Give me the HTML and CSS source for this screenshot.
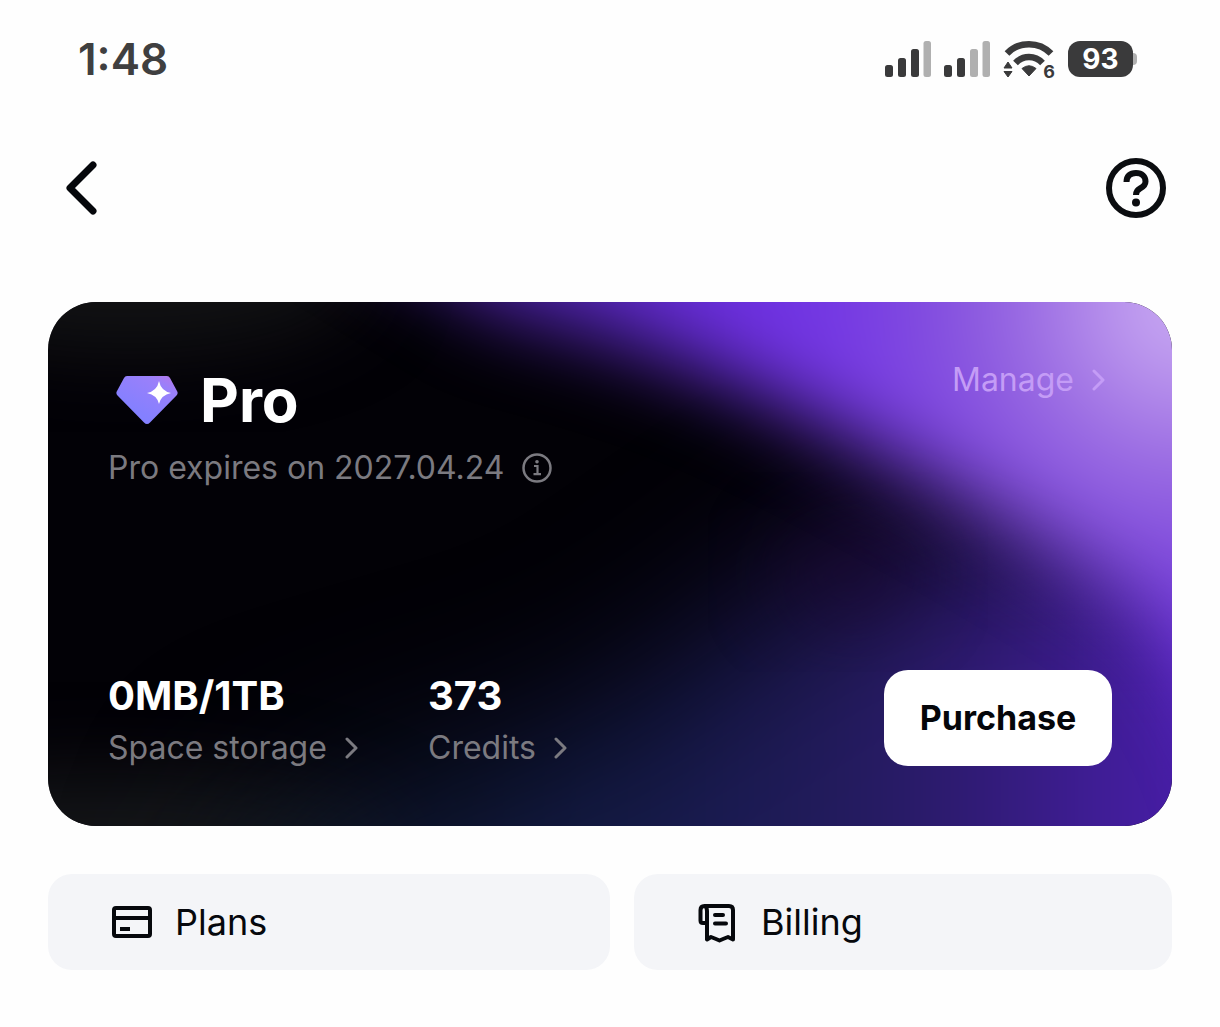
FILE: index.html
```
<!DOCTYPE html>
<html lang="en">
<head>
  <meta charset="UTF-8">
  <meta name="viewport" content="width=device-width, initial-scale=1.0">
  <title>Membership</title>
  <link rel="stylesheet" href="styles.css">
</head>
<body>
  <!-- Status bar -->
  <div class="status-bar">
    <span class="time">1:48</span>
    <div class="status-icons">
      <svg class="signal" width="46" height="36" viewBox="0 0 46 36">
        <rect x="0" y="24" width="8" height="12" rx="2.5"/>
        <rect x="13" y="17" width="8" height="19" rx="2.5"/>
        <rect x="26" y="8" width="8" height="28" rx="2.5"/>
        <rect class="off" x="38.500" y="0" width="7.500" height="36" rx="2.5"/>
      </svg>
      <svg class="signal" width="46" height="36" viewBox="0 0 46 36">
        <rect x="0" y="24" width="8" height="12" rx="2.5"/>
        <rect x="13" y="17" width="8" height="19" rx="2.5"/>
        <rect class="off" x="26" y="8" width="8" height="28" rx="2.5"/>
        <rect class="off" x="38.500" y="0" width="7.500" height="36" rx="2.5"/>
      </svg>
      <div class="wifi">
        <svg width="52" height="38" viewBox="0 0 52 38">
          <path d="M4 13.500C16 1 36 1 48 13.500" fill="none" stroke="#3a3a3b" stroke-width="6.500"/>
          <path d="M12.500 23C20 15 32 15 39.500 23" fill="none" stroke="#3a3a3b" stroke-width="6.500"/>
          <path d="M19 28.500q7-5.500 14 0L26 36z" fill="#3a3a3b" stroke="#3a3a3b" stroke-linejoin="round"/>
          <path d="M1 28l4-6L9 28zM1 31.500h8L5 37z" fill="#3a3a3b" stroke="#3a3a3b" stroke-linejoin="round"/>
        </svg>
        <span class="wifi-gen">6</span>
      </div>
      <div class="battery">93</div>
    </div>
  </div>

  <!-- Navigation -->
  <div class="nav">
    <button class="icon-btn" aria-label="Back">
      <svg width="34" height="56" viewBox="0 0 34 56">
        <path d="M29 5L6 28l23 23" fill="none" stroke="#05070b" stroke-width="7" stroke-linecap="round" stroke-linejoin="round"/>
      </svg>
    </button>
    <button class="icon-btn" aria-label="Help">
      <svg width="60" height="60" viewBox="0 0 60 60" fill="none" stroke="#0b0d10">
        <circle cx="30" cy="30" r="27" stroke-width="6"/>
        <path d="M20.500 24C20.500 18 24 15 30 15s9.500 3.500 9.500 8.500c0 4-2.500 5.500-5.500 7q-4 2-4 6.500" stroke-width="6"/>
        <circle cx="30" cy="44.500" r="4" fill="#0b0d10" stroke="none"/>
      </svg>
    </button>
  </div>

  <div class="content">
    <!-- Membership card -->
    <div class="card">
      <svg class="card-bg" viewBox="0 0 1124 524" preserveAspectRatio="none">
        <defs>
          <linearGradient id="indigo" x1="250" y1="0" x2="1124" y2="0" gradientUnits="userSpaceOnUse">
            <stop offset="0" stop-color="#0c1626"/>
            <stop offset="0.4" stop-color="#151c4c"/>
            <stop offset="0.7" stop-color="#271a62"/>
            <stop offset="1" stop-color="#4a1eac"/>
          </linearGradient>
          <radialGradient id="violet" cx="1140" cy="0" r="620" gradientUnits="userSpaceOnUse">
            <stop offset="0" stop-color="#d2b8f6"/>
            <stop offset="0.14" stop-color="#b790ec"/>
            <stop offset="0.27" stop-color="#996ae2"/>
            <stop offset="0.4" stop-color="#8450de"/>
            <stop offset="0.55" stop-color="#763ae4"/>
            <stop offset="0.72" stop-color="#6c2fe0"/>
            <stop offset="1" stop-color="#5626b8"/>
          </radialGradient>
          <filter id="soft" x="-50%" y="-50%" width="200%" height="200%" color-interpolation-filters="sRGB">
            <feGaussianBlur stdDeviation="40"/>
          </filter>
          <filter id="softer" x="-50%" y="-50%" width="200%" height="200%" color-interpolation-filters="sRGB">
            <feGaussianBlur stdDeviation="85"/>
          </filter>
        </defs>
        <rect width="1124" height="524" fill="#020106"/>
        <ellipse cx="80" cy="-30" rx="240" ry="80" fill="#121214" filter="url(#soft)"/>
        <ellipse cx="60" cy="560" rx="300" ry="90" fill="#141518" filter="url(#soft)"/>
        <path d="M220 520L560 420L820 240L1124 220H1400V800H150z" fill="url(#indigo)" filter="url(#softer)"/>
        <ellipse cx="800" cy="270" rx="70" ry="50" fill="#1c0630" opacity="0.5" filter="url(#soft)"/>
        <path d="M240-120L450 8Q620 48 740 108T930 208T1070 292Q1160 350 1200 500L1500 500V-200z" fill="url(#violet)" filter="url(#soft)"/>
      </svg>

      <div class="card-top">
        <div>
          <div class="plan">
            <svg class="gem" width="62" height="48" viewBox="0 0 62 48">
              <defs>
                <linearGradient id="gem" x1="1" y1="0" x2="0.4" y2="0.8">
                  <stop offset="0" stop-color="#b876ea"/>
                  <stop offset="0.3" stop-color="#9a80fa"/>
                  <stop offset="1" stop-color="#8480ff"/>
                </linearGradient>
              </defs>
              <path d="M11 0H51q2 0 3 2l7 13q1.500 2.500-.5 4.500L34 46.500q-3 3-6 0L1.500 19.500Q-.5 17.500 1 15L8 2q1-2 3-2z" fill="url(#gem)"/>
              <path d="M43 5q2 10 12 12q-10 2-12 11q-2-9-12-11q10-2 12-12z" fill="#fff"/>
            </svg>
            <h1>Pro</h1>
          </div>
          <div class="expires">
            <span>Pro expires on 2027.04.24</span>
            <button class="icon-btn" aria-label="Expiry details">
              <svg width="30" height="30" viewBox="0 0 30 30" fill="none" stroke="#7b7a80">
                <circle cx="15" cy="15" r="13.500" stroke-width="2.500"/>
                <path d="M12 13h3.500v8M11.500 21.200h7.500" stroke-width="2.200"/>
                <circle cx="15" cy="8.800" r="1.800" fill="#7b7a80" stroke="none"/>
              </svg>
            </button>
          </div>
        </div>
        <button class="link-btn manage">Manage
          <svg class="chevron" width="14" height="24" viewBox="0 0 14 24"><path d="M2 3l9 9-9 9"/></svg>
        </button>
      </div>

      <div class="card-bottom">
        <div class="stat">
          <div class="stat-value">0MB/1TB</div>
          <button class="link-btn">Space storage
            <svg class="chevron" width="14" height="24" viewBox="0 0 14 24"><path d="M2 3l9 9-9 9"/></svg>
          </button>
        </div>
        <div class="stat">
          <div class="stat-value">373</div>
          <button class="link-btn">Credits
            <svg class="chevron" width="14" height="24" viewBox="0 0 14 24"><path d="M2 3l9 9-9 9"/></svg>
          </button>
        </div>
        <button class="purchase">Purchase</button>
      </div>
    </div>

    <!-- Shortcuts -->
    <div class="shortcuts">
      <button class="shortcut">
        <svg width="42" height="42" viewBox="0 0 42 42" fill="none" stroke="#06080c" stroke-width="4">
          <rect x="3" y="7" width="36" height="28" rx="2"/>
          <path d="M3 17h36"/>
          <path d="M9 28h10"/>
        </svg>
        Plans
      </button>
      <button class="shortcut">
        <svg width="42" height="42" viewBox="0 0 42 42" fill="none" stroke="#06080c" stroke-width="4" stroke-linejoin="round">
          <path d="M9 22H6q-2.500 0-2.500-2.500V9q0-4 4-4H32q4 0 4 4v29.500l-5-2.500-5 2-3.500 1.500L19 38l-5-2-4 2.500V10q0-4-2.500-5"/>
          <path d="M18 14h8M18 22.500h11" stroke-linecap="round"/>
        </svg>
        Billing
      </button>
    </div>
  </div>
</body>
</html>
```
FILE: styles.css
```
* {
  box-sizing: border-box;
}

body {
  font-family: Inter, "Liberation Sans", sans-serif;
  margin: 0;
  background-color: #fefefe;
  color: #06080c;
}

button {
  padding: 0;
  border: none;
  background: none;
  color: inherit;
  font: inherit;
  cursor: pointer;
}

svg {
  display: block;
}

/* Status bar */
.status-bar {
  display: flex;
  justify-content: space-between;
  align-items: center;
  height: 118px;
  padding: 0 87px 0 78px;
}

.time {
  font-size: 44px;
  font-weight: 600;
  color: #3f3f40;
}

.status-icons {
  display: flex;
  align-items: center;
  gap: 13px;
}

.signal {
  fill: #3a3a3b;
}

.signal .off {
  fill: #b0b0b0;
}

.wifi {
  position: relative;
}

.wifi-gen {
  position: absolute;
  right: 0;
  bottom: -4px;
  font-size: 18px;
  line-height: 20px;
  font-weight: 700;
  color: #3a3a3b;
}

.battery {
  position: relative;
  width: 65px;
  height: 36px;
  border-radius: 12px;
  background-color: #3a3a3b;
  color: #fff;
  font-size: 28px;
  line-height: 36px;
  font-weight: 700;
  text-align: center;
}

.battery::after {
  content: "";
  position: absolute;
  left: 100%;
  top: 12px;
  width: 4px;
  height: 12px;
  border-radius: 0 4px 4px 0;
  background-color: #b0b0b0;
}

/* Navigation */
.nav {
  display: flex;
  justify-content: space-between;
  align-items: center;
  height: 140px;
  padding: 0 54px 0 64px;
}

.content {
  padding: 44px 48px;
}

/* Membership card */
.card {
  position: relative;
  display: flex;
  flex-direction: column;
  justify-content: space-between;
  min-height: 524px;
  padding: 60px;
  border-radius: 48px;
  overflow: hidden;
  color: #7b7a80;
  font-size: 32px;
  line-height: 36px;
}

.card-bg {
  position: absolute;
  left: 0;
  top: 0;
  width: 100%;
  height: 100%;
}

.card-top,
.card-bottom {
  position: relative;
  display: flex;
}

.card-top {
  justify-content: space-between;
  align-items: flex-start;
}

.plan {
  display: flex;
  align-items: center;
  gap: 22px;
  padding-left: 8px;
}

h1 {
  margin: 0;
  color: #fff;
  font-size: 60px;
  line-height: 76px;
  font-weight: 700;
}

.expires {
  display: flex;
  align-items: center;
  gap: 18px;
  margin-top: 12px;
}

.link-btn {
  display: flex;
  align-items: center;
  gap: 18px;
}

.chevron {
  fill: none;
  stroke: currentColor;
  stroke-width: 3;
  stroke-linecap: round;
  stroke-linejoin: round;
}

.manage {
  padding-right: 6px;
  color: #c49cf6;
}

.card-bottom {
  align-items: flex-end;
  gap: 60px;
}

.stat {
  min-width: 260px;
}

.stat-value {
  color: #fff;
  font-size: 40px;
  line-height: 68px;
  font-weight: 700;
}

.purchase {
  width: 228px;
  height: 96px;
  margin-left: auto;
  border-radius: 24px;
  background-color: #fff;
  color: #05060a;
  font-size: 34px;
  font-weight: 700;
}

/* Shortcuts */
.shortcuts {
  display: grid;
  grid-template-columns: 47fr 45fr;
  gap: 24px;
  margin-top: 48px;
}

.shortcut {
  display: flex;
  align-items: center;
  gap: 22px;
  height: 96px;
  padding: 0 63px;
  border-radius: 24px;
  background-color: #f4f5f8;
  font-size: 36px;
}
```
